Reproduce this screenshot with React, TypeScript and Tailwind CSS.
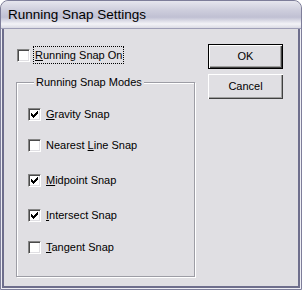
import React from "react";

type Mode = {
  pre: string;
  hot: string;
  post: string;
  checked: boolean;
  mt: string;
};

const modes: Mode[] = [
  { pre: "", hot: "G", post: "ravity Snap", checked: true, mt: "mt-[19px]" },
  { pre: "Nearest ", hot: "L", post: "ine Snap", checked: false, mt: "mt-[18px]" },
  { pre: "", hot: "M", post: "idpoint Snap", checked: true, mt: "mt-[22px]" },
  { pre: "", hot: "I", post: "ntersect Snap", checked: true, mt: "mt-[22px]" },
  { pre: "", hot: "T", post: "angent Snap", checked: false, mt: "mt-[19px]" },
];

const CheckBox = ({ checked }: { checked: boolean }) => (
  <div className="w-[13px] h-[13px] shrink-0 border border-t-[#858585] border-l-[#858585] border-r-white border-b-white bg-white shadow-[inset_1px_1px_0_#4a4a4a,inset_-1px_-1px_0_#e0dfe3] flex items-center justify-center">
    {checked && (
      <svg width="7" height="7" viewBox="0 0 7 7" shapeRendering="crispEdges">
        <path
          fill="#000"
          d="M0 2h1v3H0z M1 3h1v3H1z M2 4h1v3H2z M3 3h1v3H3z M4 2h1v3H4z M5 1h1v3H5z M6 0h1v3H6z"
        />
      </svg>
    )}
  </div>
);

const Label = ({ pre, hot, post }: { pre: string; hot: string; post: string }) => (
  <span className="whitespace-nowrap">
    {pre}
    <span className="underline underline-offset-[1px]">{hot}</span>
    {post}
  </span>
);

export default function App() {
  return (
    <div className="w-[302px] h-[290px] flex flex-col rounded-t-[8px] border border-[#7e7e9a] bg-[#e0dfe3] overflow-hidden font-['Liberation_Sans',Arial,sans-serif] text-[11px] leading-[13px] text-black">
      {/* title bar */}
      <div className="h-[28px] shrink-0 rounded-t-[7px] border-b border-[#9e9eb6] bg-[linear-gradient(to_bottom,#e6e6ee_0%,#cdcddc_35%,#c0c0d3_60%,#f3f3f7_85%,#dadae4_100%)] pl-[7px] pt-[6px] text-[13.5px] leading-[16px]">
        Running Snap Settings
      </div>

      {/* body */}
      <div className="flex-1 flex shadow-[inset_1px_0_0_#eeeef4,inset_-1px_0_0_#eeeef4,inset_0_-1px_0_#eeeef4,inset_3px_0_0_#6e6e8c,inset_-3px_0_0_#6e6e8c,inset_0_-3px_0_#6e6e8c] pl-[15px]">
        <div className="w-[180px] pt-[17px]">
          <div className="flex items-center h-[18px]">
            <div className="ml-px">
              <CheckBox checked={false} />
            </div>
            <span className="ml-[3px] border border-dotted border-black px-px h-[18px] flex items-center">
              <Label pre="" hot="R" post="unning Snap On" />
            </span>
          </div>

          <fieldset className="mt-[12px] w-[179px] border border-[#9d9da5] shadow-[inset_1px_1px_0_#fff,1px_1px_0_#fff] pl-[11px] pb-[22px]">
            <legend className="ml-[6px] px-[2px] bg-[#e0dfe3] leading-[13px]">Running Snap Modes</legend>
            {modes.map((m) => (
              <div key={m.hot} className={`flex items-center h-[13px] ${m.mt}`}>
                <CheckBox checked={m.checked} />
                <span className="ml-[5px]">
                  <Label pre={m.pre} hot={m.hot} post={m.post} />
                </span>
              </div>
            ))}
          </fieldset>
        </div>

        <div className="ml-[12px] pt-[15px] flex flex-col gap-[5px]">
          <button className="w-[75px] h-[25px] border border-black bg-[#e0dfe3] shadow-[inset_1px_1px_0_#fff,inset_-1px_-1px_0_#404040,inset_-2px_-2px_0_#a0a0a0] flex items-center justify-center">
            OK
          </button>
          <button className="w-[75px] h-[25px] bg-[#e0dfe3] shadow-[inset_1px_1px_0_#fff,inset_-1px_-1px_0_#404040,inset_-2px_-2px_0_#a0a0a0] flex items-center justify-center">
            Cancel
          </button>
        </div>
      </div>
    </div>
  );
}
